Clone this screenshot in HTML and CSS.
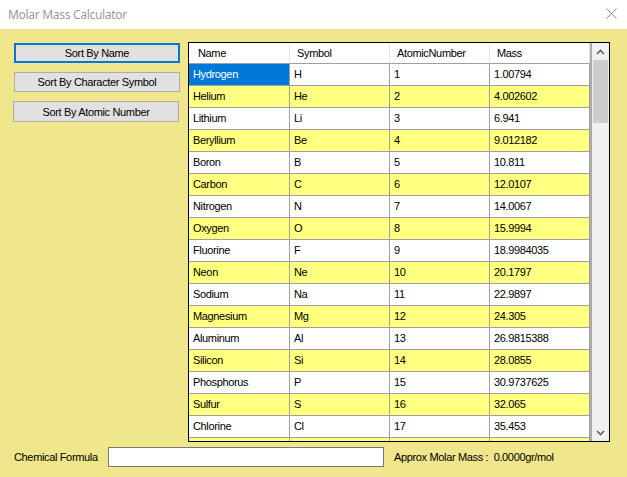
FILE: index.html
```html
<!DOCTYPE html>
<html>
<head>
<meta charset="utf-8">
<link rel="stylesheet" href="styles.css">
</head>
<body>
<div class="window">
  <div class="titlebar">
    <span class="title">Molar Mass Calculator</span>
    <svg class="close" width="11" height="11" viewBox="0 0 11 11"><path d="M0.5 0.5 L10.5 10.5 M10.5 0.5 L0.5 10.5" stroke="#8a8a8a" stroke-width="1" fill="none"/></svg>
  </div>
  <div class="main">
    <div class="sidebar">
      <button class="btn btn-default">Sort By Name</button>
      <button class="btn">Sort By Character Symbol</button>
      <button class="btn btn-shift">Sort By Atomic Number</button>
    </div>
    <div class="grid">
      <div class="table-wrap">
        <div class="table">
          <div class="hcell hfirst">Name</div><div class="hcell">Symbol</div><div class="hcell">AtomicNumber</div><div class="hcell">Mass</div>
          <div class="cell sel">Hydrogen</div><div class="cell">H</div><div class="cell">1</div><div class="cell">1.00794</div>
          <div class="cell alt">Helium</div><div class="cell alt">He</div><div class="cell alt">2</div><div class="cell alt">4.002602</div>
          <div class="cell">Lithium</div><div class="cell">Li</div><div class="cell">3</div><div class="cell">6.941</div>
          <div class="cell alt">Beryllium</div><div class="cell alt">Be</div><div class="cell alt">4</div><div class="cell alt">9.012182</div>
          <div class="cell">Boron</div><div class="cell">B</div><div class="cell">5</div><div class="cell">10.811</div>
          <div class="cell alt">Carbon</div><div class="cell alt">C</div><div class="cell alt">6</div><div class="cell alt">12.0107</div>
          <div class="cell">Nitrogen</div><div class="cell">N</div><div class="cell">7</div><div class="cell">14.0067</div>
          <div class="cell alt">Oxygen</div><div class="cell alt">O</div><div class="cell alt">8</div><div class="cell alt">15.9994</div>
          <div class="cell">Fluorine</div><div class="cell">F</div><div class="cell">9</div><div class="cell">18.9984035</div>
          <div class="cell alt">Neon</div><div class="cell alt">Ne</div><div class="cell alt">10</div><div class="cell alt">20.1797</div>
          <div class="cell">Sodium</div><div class="cell">Na</div><div class="cell">11</div><div class="cell">22.9897</div>
          <div class="cell alt">Magnesium</div><div class="cell alt">Mg</div><div class="cell alt">12</div><div class="cell alt">24.305</div>
          <div class="cell">Aluminum</div><div class="cell">Al</div><div class="cell">13</div><div class="cell">26.9815388</div>
          <div class="cell alt">Silicon</div><div class="cell alt">Si</div><div class="cell alt">14</div><div class="cell alt">28.0855</div>
          <div class="cell">Phosphorus</div><div class="cell">P</div><div class="cell">15</div><div class="cell">30.9737625</div>
          <div class="cell alt">Sulfur</div><div class="cell alt">S</div><div class="cell alt">16</div><div class="cell alt">32.065</div>
          <div class="cell">Chlorine</div><div class="cell">Cl</div><div class="cell">17</div><div class="cell">35.453</div>
          <div class="cell alt"></div><div class="cell alt"></div><div class="cell alt"></div><div class="cell alt"></div>
        </div>
      </div>
      <div class="scrollbar">
        <div class="arrow">
          <svg width="9" height="6" viewBox="0 0 9 6"><path d="M1 5 L4.5 1.5 L8 5" stroke="#606060" stroke-width="1.6" fill="none"/></svg>
        </div>
        <div class="track"><div class="thumb"></div></div>
        <div class="arrow">
          <svg width="9" height="6" viewBox="0 0 9 6"><path d="M1 1 L4.5 4.5 L8 1" stroke="#606060" stroke-width="1.6" fill="none"/></svg>
        </div>
      </div>
    </div>
  </div>
  <div class="footer">
    <span class="label">Chemical Formula</span>
    <input class="formula" type="text">
    <span class="result">Approx Molar Mass :&nbsp; 0.0000gr/mol</span>
  </div>
</div>
</body>
</html>
```
FILE: styles.css
```css
html, body {
  margin: 0;
  padding: 0;
}
body {
  width: 627px;
  height: 477px;
  overflow: hidden;
  background: #f0e68c;
  font-family: "Liberation Sans", Arial, sans-serif;
  font-size: 11px;
  letter-spacing: -0.35px;
  color: #000;
}
.window {
  display: flex;
  flex-direction: column;
  height: 477px;
}
.titlebar {
  height: 29px;
  background: #fff;
  display: flex;
  align-items: center;
  justify-content: space-between;
  padding: 0 10px 0 8px;
  box-sizing: border-box;
}
.title {
  font-family: "Noto Sans", "Open Sans", sans-serif;
  font-size: 12px;
  letter-spacing: -0.3px;
  color: #999;
}
.close {
  display: block;
  margin-top: -3px;
}
.main {
  display: flex;
  padding: 13px 0 0 14px;
  gap: 8px;
}
.sidebar {
  display: flex;
  flex-direction: column;
  gap: 9px;
  margin-top: 1px;
  width: 166px;
}
.btn {
  width: 166px;
  height: 20px;
  padding: 0;
  margin: 0;
  background: #e1e1e1;
  border: 1px solid #adadad;
  font-family: "Liberation Sans", Arial, sans-serif;
  font-size: 11px;
  letter-spacing: -0.35px;
  color: #000;
  box-sizing: border-box;
}
.btn-default {
  border: 2px solid #0078d7;
}
.btn-shift {
  margin-left: -1px;
  height: 21px;
}
.grid {
  width: 422px;
  height: 400px;
  border: 1px solid #000;
  box-sizing: border-box;
  display: flex;
  overflow: hidden;
}
.table-wrap {
  width: 403px;
  height: 398px;
  overflow: hidden;
  background: #ababab;
}
.table {
  display: grid;
  grid-template-columns: 101px 100px 100px 100px;
  grid-template-rows: 21px;
  grid-auto-rows: 22px;
  width: 401px;
}
.hcell {
  height: 21px;
  line-height: 20px;
  padding-left: 7px;
  background: #fff;
  border-right: 1px solid #e5e5e5;
  border-bottom: 1px solid #a0a0a0;
  box-sizing: border-box;
  white-space: nowrap;
}
.hfirst {
  padding-left: 9px;
}
.cell {
  height: 22px;
  line-height: 21px;
  padding-left: 4px;
  background: #fff;
  border-right: 1px solid #a0a0a0;
  border-bottom: 1px solid #a0a0a0;
  box-sizing: border-box;
  white-space: nowrap;
}
.cell.alt {
  background: #ffff80;
}
.cell.sel {
  background: #0078d7;
  color: #fff;
}
.scrollbar {
  width: 17px;
  height: 398px;
  background: #f0f0f0;
  display: flex;
  flex-direction: column;
}
.arrow {
  height: 17px;
  display: flex;
  align-items: center;
  justify-content: center;
}
.track {
  flex: 1;
  padding: 0 1px;
}
.thumb {
  height: 63px;
  background: #cdcdcd;
}
.footer {
  display: flex;
  align-items: center;
  padding: 5px 0 0 14px;
}
.label {
  width: 94px;
}
.formula {
  width: 276px;
  height: 20px;
  border: 1px solid #7a7a7a;
  background: #fff;
  box-sizing: border-box;
  padding: 0;
  margin: 0;
}
.result {
  margin-left: 10px;
}
```
